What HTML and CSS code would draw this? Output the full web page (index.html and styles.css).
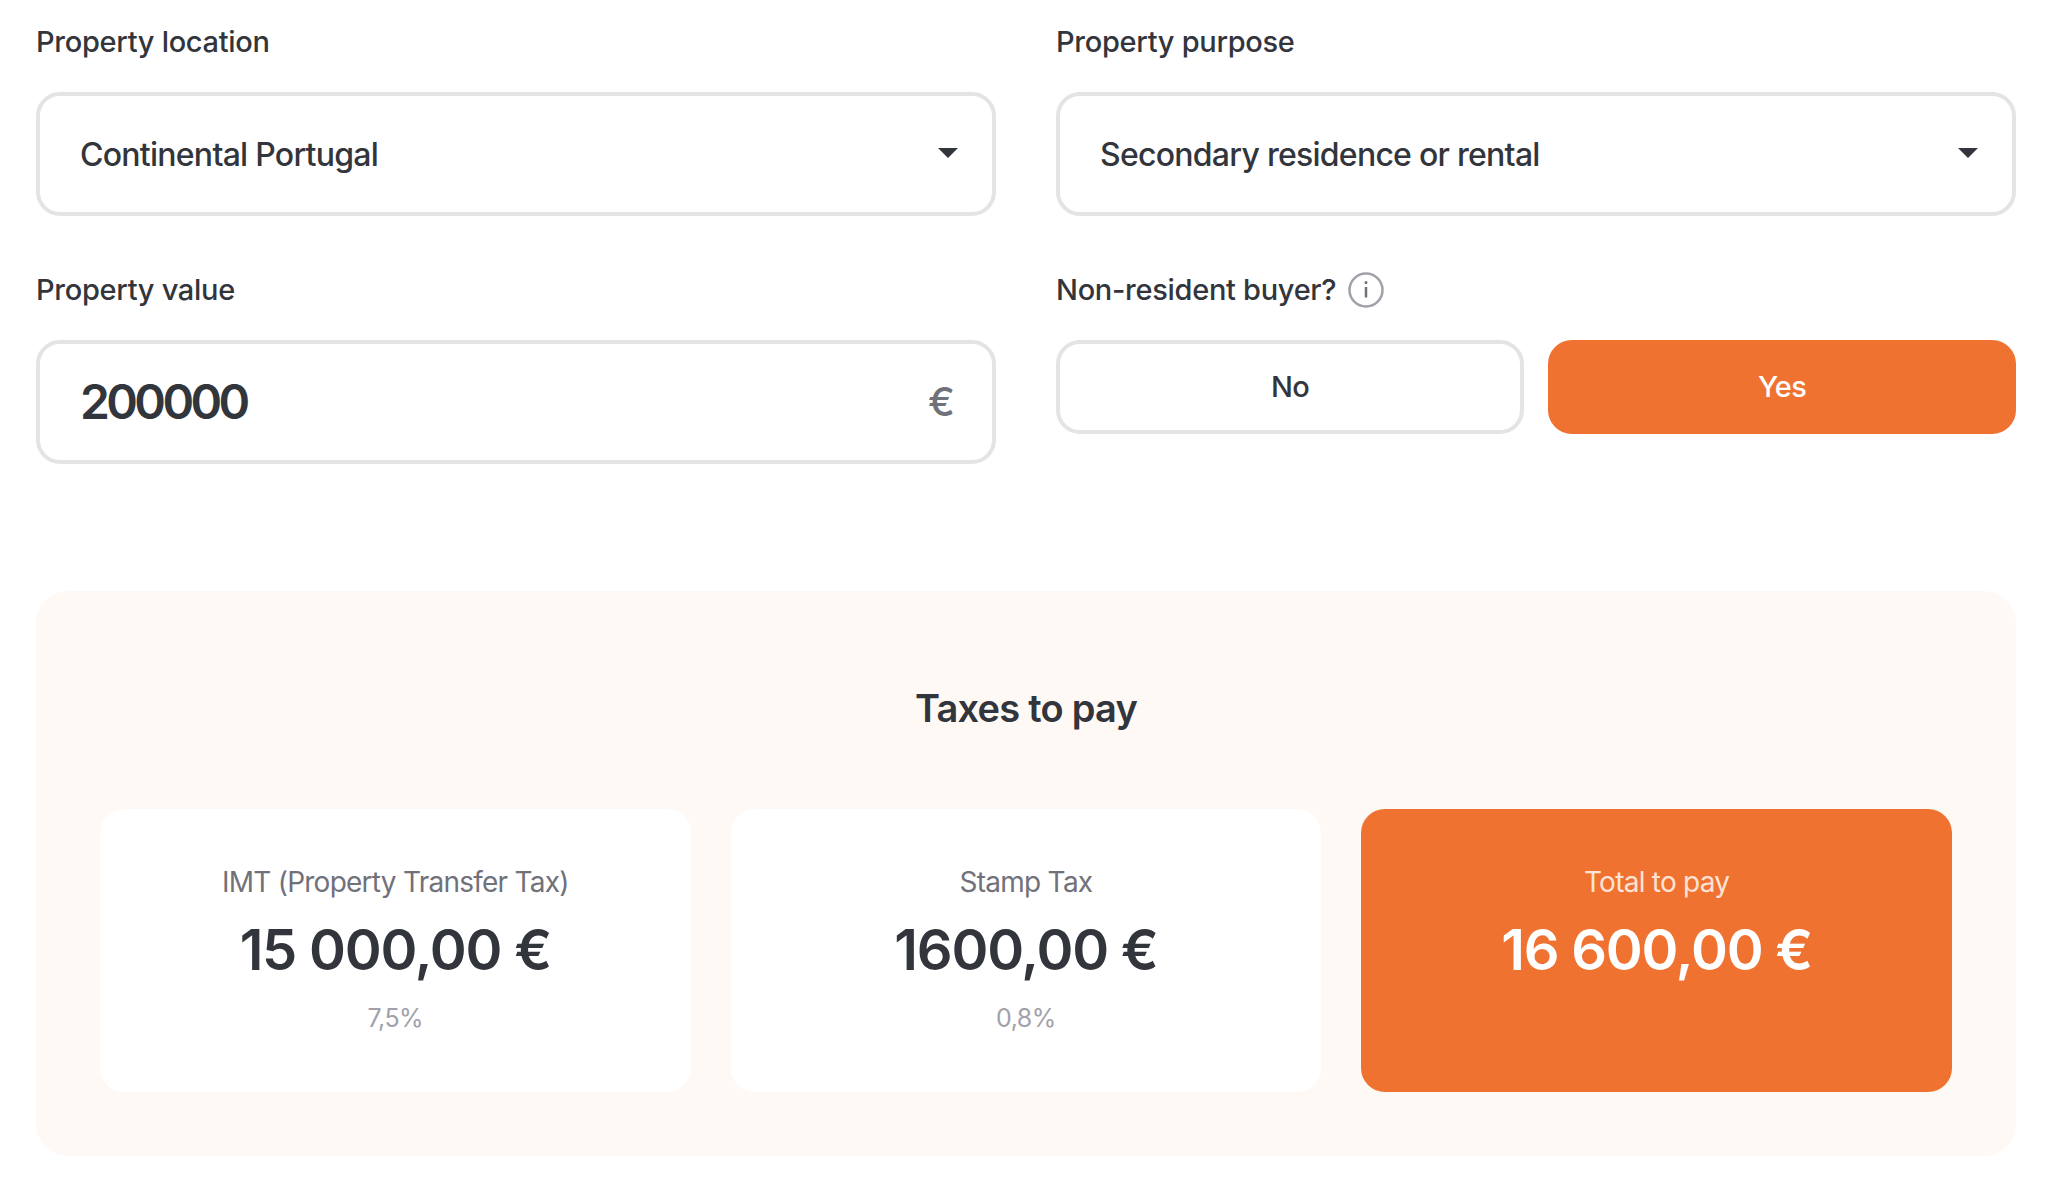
FILE: index.html
```html
<!DOCTYPE html>
<html lang="en">
<head>
    <meta charset="UTF-8">
    <title>Property tax calculator</title>
    <link rel="stylesheet" href="styles.css">
</head>
<body>
    <div class="calculator">
        <div class="form-grid">
            <div class="field">
                <div class="field-label">Property location</div>
                <div class="select-box">
                    <span>Continental Portugal</span>
                    <svg class="caret" viewBox="0 0 20 10"><path d="M0 0h20L10 10z"/></svg>
                </div>
            </div>
            <div class="field">
                <div class="field-label">Property purpose</div>
                <div class="select-box">
                    <span>Secondary residence or rental</span>
                    <svg class="caret" viewBox="0 0 20 10"><path d="M0 0h20L10 10z"/></svg>
                </div>
            </div>
            <div class="field">
                <div class="field-label">Property value</div>
                <div class="value-box">
                    <span class="value-number">200000</span>
                    <span class="value-unit">€</span>
                </div>
            </div>
            <div class="field">
                <div class="field-label">
                    Non-resident buyer?
                    <svg class="info-icon" viewBox="0 0 36 36">
                        <circle cx="18" cy="18" r="16.5"/>
                        <path d="M18 15v10.5"/>
                        <circle class="info-dot" cx="18" cy="10.5" r="1.5"/>
                    </svg>
                </div>
                <div class="toggle-row">
                    <div class="toggle">No</div>
                    <div class="toggle active">Yes</div>
                </div>
            </div>
        </div>

        <div class="results">
            <h2 class="results-title">Taxes to pay</h2>
            <div class="cards">
                <div class="card">
                    <div class="card-label">IMT (Property Transfer Tax)</div>
                    <div class="card-amount">15 000,00 €</div>
                    <div class="card-rate">7,5%</div>
                </div>
                <div class="card">
                    <div class="card-label">Stamp Tax</div>
                    <div class="card-amount">1600,00 €</div>
                    <div class="card-rate">0,8%</div>
                </div>
                <div class="card total">
                    <div class="card-label">Total to pay</div>
                    <div class="card-amount">16 600,00 €</div>
                </div>
            </div>
        </div>
    </div>
</body>
</html>
```

FILE: styles.css
```css
:root {
    --text-color: #32353b;
    --muted-color: #71717a;
    --faint-color: #a1a1aa;
    --border-color: #e4e4e4;
    --accent-color: #ef7230;
    --panel-bg: #fff9f6;
}

* {
    box-sizing: border-box;
}

body {
    margin: 0;
    background: #fff;
    font-family: 'Inter', 'Liberation Sans', sans-serif;
    color: var(--text-color);
}

.calculator {
    width: 2052px;
    padding: 22px 36px 16px;
}

.form-grid {
    display: grid;
    grid-template-columns: 960px 960px;
    column-gap: 60px;
    row-gap: 54px;
}

.field-label {
    display: flex;
    align-items: center;
    gap: 12px;
    height: 39px;
    margin-bottom: 31px;
    font-size: 29px;
    font-weight: 500;
    letter-spacing: -0.3px;
}

.info-icon {
    width: 36px;
    height: 36px;
    fill: none;
    stroke: #a1a1aa;
    stroke-width: 2.5;
}

.info-icon path {
    stroke: #71717a;
}

.info-icon .info-dot {
    fill: #71717a;
    stroke: none;
}

.select-box,
.value-box {
    display: flex;
    align-items: center;
    justify-content: space-between;
    height: 124px;
    padding: 0 34px 0 40px;
    border: 4px solid var(--border-color);
    border-radius: 24px;
}

.value-box {
    padding-right: 37px;
    padding-bottom: 2px;
}

.select-box span {
    font-size: 32px;
    font-weight: 500;
    letter-spacing: -0.74px;
}

.caret {
    width: 20px;
    height: 10px;
    margin-bottom: 3px;
    fill: var(--text-color);
}

.value-number {
    font-size: 48px;
    font-weight: 600;
    letter-spacing: -3.6px;
}

.value-unit {
    font-size: 40px;
    font-weight: 500;
    color: var(--muted-color);
}

.toggle-row {
    display: grid;
    grid-template-columns: 1fr 1fr;
    gap: 24px;
}

.toggle {
    display: flex;
    align-items: center;
    justify-content: center;
    height: 94px;
    padding-bottom: 1px;
    border: 4px solid var(--border-color);
    border-radius: 24px;
    font-size: 29px;
    font-weight: 500;
    letter-spacing: -0.7px;
}

.toggle.active {
    background: var(--accent-color);
    border-color: var(--accent-color);
    color: #fff;
}

.results {
    margin-top: 127px;
    padding: 92px 64px 64px;
    background: var(--panel-bg);
    border-radius: 32px;
}

.results-title {
    margin: 0 0 76px;
    font-size: 38px;
    line-height: 50px;
    font-weight: 600;
    text-align: center;
    letter-spacing: -0.75px;
}

.cards {
    display: grid;
    grid-template-columns: repeat(3, 1fr);
    gap: 40px;
}

.card {
    height: 283px;
    padding: 53px 20px 0;
    background: #fff;
    border-radius: 24px;
    text-align: center;
}

.card-label {
    font-size: 28px;
    line-height: 40px;
    color: var(--muted-color);
    letter-spacing: -0.75px;
}

.card-amount {
    margin-top: 14px;
    font-size: 56px;
    line-height: 68px;
    font-weight: 600;
    letter-spacing: -1.2px;
}

.card-rate {
    margin-top: 17px;
    font-size: 25px;
    line-height: 34px;
    letter-spacing: -0.5px;
    color: var(--faint-color);
}

.card.total {
    background: var(--accent-color);
    color: #fff;
}

.card.total .card-label {
    color: #fde3d5;
}
```
